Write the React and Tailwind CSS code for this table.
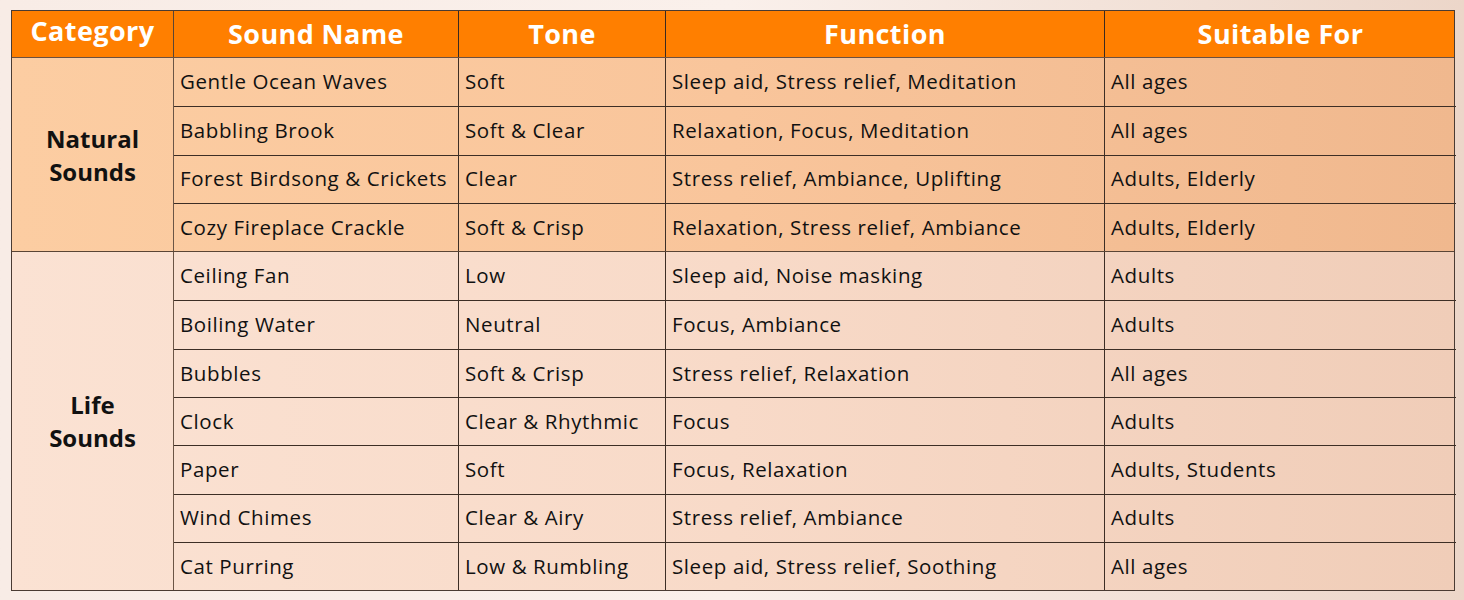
import React from 'react';

const COLS = 'grid grid-cols-[285px_207px_439px_351px]';

const sections = [
  {
    name: ['Natural', 'Sounds'],
    bg: 'bg-gradient-to-r from-[#fccda2] via-[#f9c59b] to-[#f0b88e]',
    rows: [
      ['Gentle Ocean Waves', 'Soft', 'Sleep aid, Stress relief, Meditation', 'All ages'],
      ['Babbling Brook', 'Soft & Clear', 'Relaxation, Focus, Meditation', 'All ages'],
      ['Forest Birdsong & Crickets', 'Clear', 'Stress relief, Ambiance, Uplifting', 'Adults, Elderly'],
      ['Cozy Fireplace Crackle', 'Soft & Crisp', 'Relaxation, Stress relief, Ambiance', 'Adults, Elderly'],
    ],
  },
  {
    name: ['Life', 'Sounds'],
    bg: 'bg-gradient-to-r from-[#fbe2d3] via-[#f8dac8] to-[#f0cdb8]',
    rows: [
      ['Ceiling Fan', 'Low', 'Sleep aid, Noise masking', 'Adults'],
      ['Boiling Water', 'Neutral', 'Focus, Ambiance', 'Adults'],
      ['Bubbles', 'Soft & Crisp', 'Stress relief, Relaxation', 'All ages'],
      ['Clock', 'Clear & Rhythmic', 'Focus', 'Adults'],
      ['Paper', 'Soft', 'Focus, Relaxation', 'Adults, Students'],
      ['Wind Chimes', 'Clear & Airy', 'Stress relief, Ambiance', 'Adults'],
      ['Cat Purring', 'Low & Rumbling', 'Sleep aid, Stress relief, Soothing', 'All ages'],
    ],
  },
];

const headers = ['Sound Name', 'Tone', 'Function', 'Suitable For'];

export default function App() {
  return (
    <div className="w-[1464px] h-[600px] bg-gradient-to-r from-[#f8ece6] via-[#faf0eb] to-[#ecd6c9] pt-[10px] pl-[11px] font-['Open_Sans',sans-serif] text-[#111]">
      <div className="w-[1444px] border border-[#4a3b33]">
        {/* Header */}
        <div className="flex h-[47px] bg-[#ff7f00] text-white font-bold tracking-[0.4px] border-b border-[#6b5040]">
          <div className="w-[162px] shrink-0 flex items-center justify-center text-[27px] border-r border-[#5a4535] pb-1.5">
            Category
          </div>
          <div className={COLS + ' flex-1'}>
            {headers.map((h, i) => (
              <div
                key={h}
                className={
                  'flex items-center justify-center text-[27px] ' +
                  (i < 3 ? 'border-r border-[#3a2a20]' : '')
                }
              >
                {h}
              </div>
            ))}
          </div>
        </div>

        {sections.map((s, si) => (
          <div key={si} className={'flex ' + s.bg + (si > 0 ? ' border-t border-[#5a4535]' : '')}>
            <div className="w-[162px] shrink-0 flex flex-col items-center justify-center text-[24px] font-bold leading-[33px] border-r border-[#6b5545]">
              <span>{s.name[0]}</span>
              <span>{s.name[1]}</span>
            </div>
            <div className="flex-1">
              {s.rows.map((r, ri) => (
                <div
                  key={ri}
                  className={COLS + ' h-[48.3px] text-[20.5px] tracking-[0.6px]' + (ri > 0 ? ' border-t border-[#3d2e25]' : '')}
                >
                  {r.map((c, ci) => (
                    <div
                      key={ci}
                      className={
                        'flex items-center pl-[6px] pb-px ' + (ci < 3 ? 'border-r border-[#3d2e25]' : '')
                      }
                    >
                      {c}
                    </div>
                  ))}
                </div>
              ))}
            </div>
          </div>
        ))}
      </div>
    </div>
  );
}
